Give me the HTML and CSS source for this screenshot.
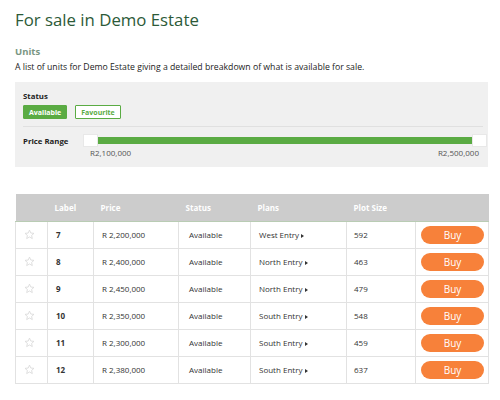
FILE: index.html
```html
<!DOCTYPE html>
<html lang="en">
<head>
    <meta charset="UTF-8">
    <title>For sale in Demo Estate</title>
    <link rel="stylesheet" href="styles.css">
</head>
<body>
    <div class="page">
        <h1>For sale in Demo Estate</h1>
        <h2>Units</h2>
        <p class="intro">A list of units for Demo Estate giving a detailed breakdown of what is available for sale.</p>

        <div class="filters">
            <div class="filter-label">Status</div>
            <div class="status-buttons">
                <button class="chip active">Available</button>
                <button class="chip">Favourite</button>
            </div>
            <div class="price-row">
                <div class="filter-label">Price Range</div>
                <div class="slider">
                    <div class="track">
                        <span class="handle"></span>
                        <span class="fill"></span>
                        <span class="handle"></span>
                    </div>
                    <div class="range-values">
                        <span>R2,100,000</span>
                        <span>R2,500,000</span>
                    </div>
                </div>
            </div>
        </div>

        <table class="units">
            <thead>
                <tr>
                    <th class="fav"></th>
                    <th class="col-label">Label</th>
                    <th class="col-price">Price</th>
                    <th class="col-status">Status</th>
                    <th class="col-plans">Plans</th>
                    <th class="col-size">Plot Size</th>
                    <th class="action"></th>
                </tr>
            </thead>
            <tbody id="unitRows"></tbody>
        </table>
    </div>

    <script>
        const units = [
            { label: 7, price: 'R 2,200,000', plan: 'West Entry', size: 592 },
            { label: 8, price: 'R 2,400,000', plan: 'North Entry', size: 463 },
            { label: 9, price: 'R 2,450,000', plan: 'North Entry', size: 479 },
            { label: 10, price: 'R 2,350,000', plan: 'South Entry', size: 548 },
            { label: 11, price: 'R 2,300,000', plan: 'South Entry', size: 459 },
            { label: 12, price: 'R 2,380,000', plan: 'South Entry', size: 637 }
        ];

        const star = '<svg width="11" height="11" viewBox="0 0 24 24"><path d="M12 2.5l2.9 6.3 6.8.7-5.1 4.6 1.5 6.8L12 17.4l-6.1 3.5 1.5-6.8-5.1-4.6 6.8-.7z" fill="none" stroke="#d8d8d8" stroke-width="1.8" stroke-linejoin="round"/></svg>';

        const tbody = document.getElementById('unitRows');
        units.forEach(unit => {
            const row = document.createElement('tr');
            row.innerHTML = `
                <td class="fav">${star}</td>
                <td class="col-label">${unit.label}</td>
                <td class="col-price">${unit.price}</td>
                <td class="col-status">Available</td>
                <td class="col-plans">${unit.plan} <span class="caret"></span></td>
                <td class="col-size">${unit.size}</td>
                <td class="action"><button class="buy">Buy</button></td>
            `;
            tbody.appendChild(row);
        });
    </script>
</body>
</html>
```

FILE: styles.css
```css
body {
    margin: 0;
    font-family: "Open Sans", sans-serif;
    color: #222;
    background: #fff;
}

.page {
    width: 473px;
    padding: 8px 0 0 15px;
}

h1 {
    margin: 0;
    font-size: 16.8px;
    font-weight: 400;
    color: #2c5a38;
    line-height: 24px;
}

h2 {
    margin: 13px 0 0;
    font-size: 9.5px;
    font-weight: 700;
    color: #7a9683;
    line-height: 14px;
}

.intro {
    margin: 1px 0 8px;
    font-size: 8.7px;
    line-height: 14px;
    color: #222;
}

.filters {
    background: #f0f0f0;
    padding: 8px 1px 8px 8px;
}

.filter-label {
    font-size: 7.8px;
    font-weight: 700;
    color: #222;
    line-height: 12px;
}

.status-buttons {
    display: flex;
    gap: 8px;
    margin: 3px 4px 0 0;
    padding-bottom: 7px;
    border-bottom: 1px solid #e0e0e0;
}

.chip {
    font-family: "Open Sans", sans-serif;
    font-size: 7px;
    font-weight: 700;
    padding: 0 5px;
    height: 14px;
    border: 1px solid #5aab43;
    border-radius: 1px;
    background: #fff;
    color: #5aab43;
}

.chip.active {
    background: #5aab43;
    color: #fff;
}

.price-row {
    display: flex;
    align-items: flex-start;
    margin-top: 6px;
}

.price-row .filter-label {
    width: 60px;
    margin-top: 2px;
}

.slider {
    flex: 1;
}

.track {
    display: flex;
    align-items: center;
    height: 14px;
}

.handle {
    width: 15px;
    height: 13px;
    background: #fff;
    border: 1px solid #e8e8e8;
    box-sizing: border-box;
}

.fill {
    flex: 1;
    height: 7px;
    background: #5aab43;
}

.range-values {
    display: flex;
    justify-content: space-between;
    padding: 0 8px 0 7px;
    font-size: 8px;
    line-height: 12px;
    color: #555;
}

.units {
    width: 473px;
    margin-top: 27px;
    border-collapse: collapse;
    table-layout: fixed;
    font-size: 8px;
    color: #333;
}

.units th,
.units td {
    box-sizing: border-box;
}

.units th {
    background: #cccccc;
    color: #fff;
    font-weight: 700;
    text-align: left;
    height: 27px;
    padding: 0 0 0 7px;
    border-bottom: 1px solid #b9ccb4;
}

.units td {
    height: 27px;
    padding: 0 0 0 8px;
    border: 1px solid #e2e2e2;
}

.units .fav {
    width: 32px;
}

.units td.fav svg {
    display: block;
}

.units .col-label {
    width: 46px;
}

.units td.col-label {
    font-weight: 700;
}

.units .col-price {
    width: 85px;
}

.units .col-status {
    width: 72px;
}

.units td.col-status {
    padding-left: 10px;
}

.units .col-plans {
    width: 96px;
}

.units .col-size {
    width: 69px;
}

.units td.col-size {
    padding-left: 7px;
}

.caret {
    display: inline-block;
    width: 0;
    height: 0;
    border-left: 3px solid #333;
    border-top: 2.5px solid transparent;
    border-bottom: 2.5px solid transparent;
}

.units .action {
    width: 73px;
    padding: 0 0 0 5px;
}

.buy {
    width: 63px;
    height: 18px;
    border: none;
    border-radius: 9px;
    background: #f7813a;
    color: #fff;
    font-family: "Open Sans", sans-serif;
    font-size: 10px;
    display: block;
    padding: 0;
}
```
